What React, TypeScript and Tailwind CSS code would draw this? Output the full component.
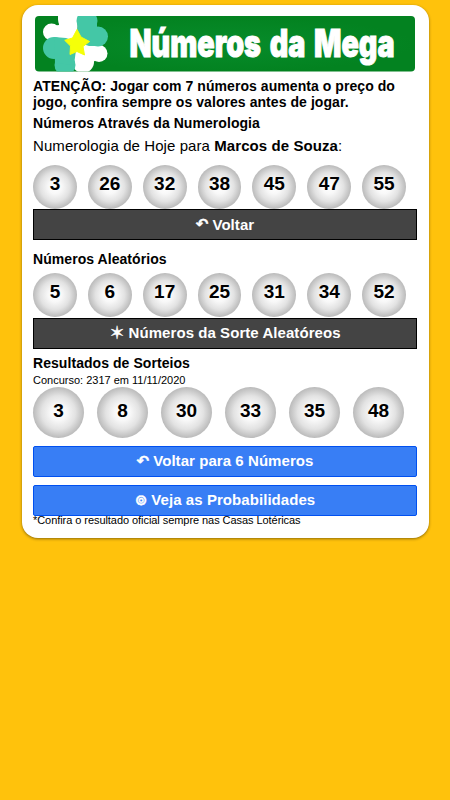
const numerology = [3, 26, 32, 38, 45, 47, 55]
const randomNumbers = [5, 6, 17, 25, 31, 34, 52]
const results = [3, 8, 30, 33, 35, 48]

const Banner = () => (
	<svg
		viewBox="0 0 380 56"
		className="ml-0.5 block h-14 w-[380px] overflow-visible"
		role="img"
		aria-label="Números da Mega"
	>
		<defs>
			<clipPath id="frame">
				<rect width="380" height="55.5" rx="4" />
			</clipPath>
			<radialGradient id="green">
				<stop offset="0" stopColor="#078c2b" />
				<stop offset="1" stopColor="#038220" />
			</radialGradient>
		</defs>
		<g clipPath="url(#frame)">
			<rect width="380" height="56" fill="url(#green)" />
			<g fill="#fff">
				<circle cx="33" cy="3" r="10" />
				<circle cx="16.5" cy="16" r="8.5" />
				<path d="M23 0H43L42 26L30 24L18 24L17 10L24 9Z" />
				<circle cx="48" cy="46" r="11" />
				<circle cx="64" cy="37.5" r="8.5" />
				<path d="M42 26L55 27L66 29L68 40L58 46L54 55L38 50Z" />
			</g>
			<g fill="#44c7a6">
				<circle cx="52" cy="5" r="10.5" />
				<circle cx="63" cy="20.5" r="10" />
				<path d="M43 0L62 6L62 30L54 30L42 26Z" />
				<circle cx="19" cy="32" r="11" />
				<circle cx="30" cy="49" r="10.5" />
				<path d="M19 21L31 22L42 26L39 49L20 47Z" />
			</g>
			<path
				d="M42 13.5L46 21L54.5 25.5L48 30.5L49.5 39L42 35.5L35 38.5L35.5 30L29.7 24.3L37.5 22Z"
				fill="#f5ff08"
				strokeLinejoin="round"
				stroke="#f5ff08"
			/>
		</g>
		<text
			x="94.5"
			y="41"
			textLength="265"
			lengthAdjust="spacingAndGlyphs"
			className="fill-white stroke-white font-['Inter'] text-[38px] font-black [word-spacing:4px]"
			strokeWidth="1"
		>
			Números da Mega
		</text>
	</svg>
)

type TBallsProps = {
	numbers: number[]
	big?: boolean
}

const Balls = ({ numbers, big }: TBallsProps) => (
	<div className={big ? 'grid grid-cols-6' : 'grid grid-cols-7'}>
		{numbers.map(number => (
			<div
				key={number}
				className={`flex aspect-square w-4/5 justify-center rounded-full bg-[radial-gradient(circle,#fff_0%,#f8f8f8_22%,#e2e2e2_47%,#b8b8b8_72%)] text-[19px] leading-[22px] font-bold ${
					big ? 'pt-[13px]' : 'pt-[8px]'
				}`}
			>
				{number}
			</div>
		))}
	</div>
)

const darkButton =
	'flex h-[31px] w-full items-center justify-center gap-1 border border-black bg-[#444] text-[15px] font-bold tracking-[0.06px] text-white'
const blueButton =
	'flex h-[31px] w-full items-center justify-center gap-1 rounded-xs border border-[#0050f0] bg-[#387ef5] text-[15px] font-bold tracking-[0.06px] text-white'

const Icon = ({ glyph, large }: { glyph: string; large?: boolean }) => (
	<span
		className={`font-['DejaVu_Sans'] leading-none [-webkit-text-stroke:0.4px_white] ${
			large ? 'text-[18px]' : 'text-[15px]'
		}`}
	>
		{glyph}
	</span>
)

export default function App() {
	return (
		<main className="min-h-screen bg-[#ffc20c] pt-[5px] pl-[22px] font-['Liberation_Sans','DejaVu_Sans',sans-serif] text-black">
			<section className="h-[533px] w-[406.5px] rounded-2xl bg-white pt-[11px] pl-[11px] shadow-[0_1px_3px_rgba(0,0,0,0.45)]">
				<div className="w-[384px]">
					<Banner />
					<p className="mt-[6px] text-sm leading-4 font-bold tracking-[0.06px]">
						ATENÇÃO: Jogar com 7 números aumenta o preço do jogo, confira sempre
						os valores antes de jogar.
					</p>
					<h2 className="mt-[4px] text-sm leading-[18px] font-bold tracking-[0.06px]">
						Números Através da Numerologia
					</h2>
					<p className="mt-[5px] mb-[11px] text-[15px] leading-[17px] tracking-[0.08px]">
						Numerologia de Hoje para <b>Marcos de Souza</b>:
					</p>
					<Balls numbers={numerology} />
					<button className={`pt-px ${darkButton}`}>
						<Icon glyph="↶" /> Voltar
					</button>
					<h2 className="mt-[11px] mb-[5px] text-sm leading-[17px] font-bold tracking-[0.06px]">
						Números Aleatórios
					</h2>
					<Balls numbers={randomNumbers} />
					<button className={`mt-[1.2px] ${darkButton}`}>
						<Icon glyph="✶" large /> Números da Sorte Aleatóreos
					</button>
					<h2 className="mt-[5px] text-sm leading-[18px] font-bold tracking-[0.06px]">
						Resultados de Sorteios
					</h2>
					<p className="mt-[2px] text-[11px] leading-[13px]">
						Concurso: 2317 em 11/11/2020
					</p>
					<Balls numbers={results} big />
					<button className={`mt-[8px] ${blueButton}`}>
						<Icon glyph="↶" /> Voltar para 6 Números
					</button>
					<button className={`mt-[8px] ${blueButton}`}>
						<Icon glyph="⊚" /> Veja as Probabilidades
					</button>
					<p className="-mt-[2px] text-[11px] leading-[13px] tracking-[-0.06px]">
						*Confira o resultado oficial sempre nas Casas Lotéricas
					</p>
				</div>
			</section>
		</main>
	)
}
